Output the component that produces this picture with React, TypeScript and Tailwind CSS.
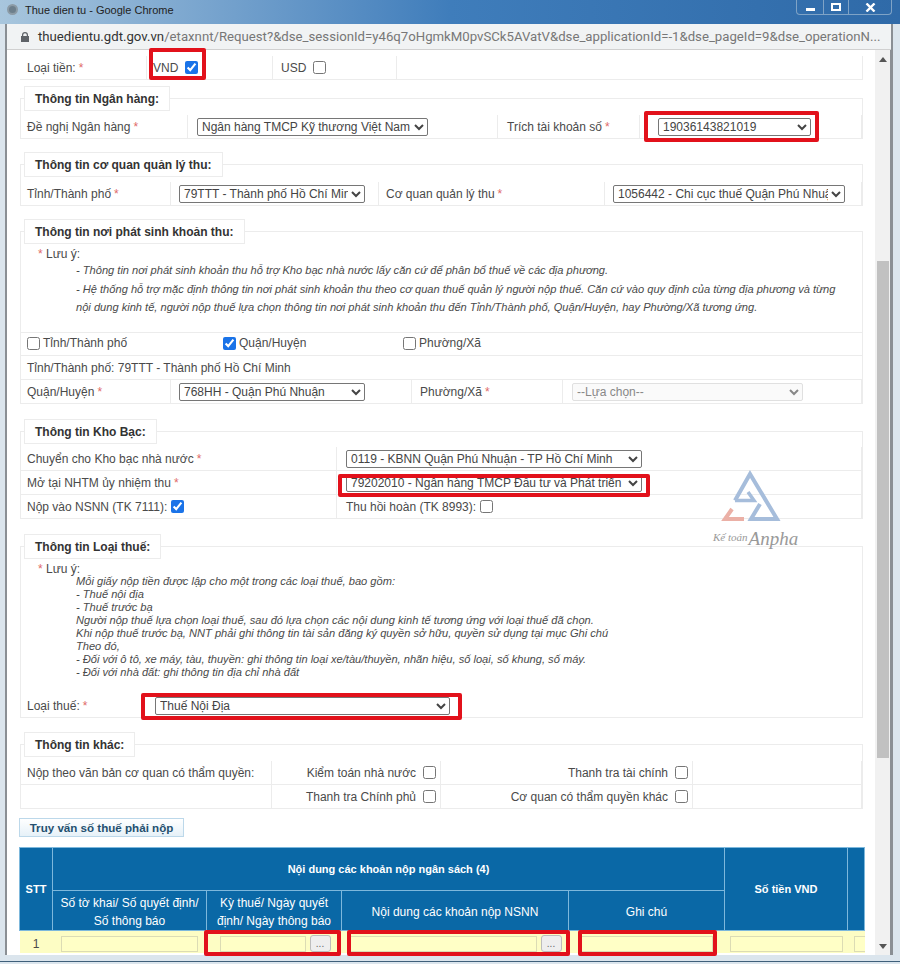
import type { ReactNode } from "react";

const line = "border-[#ececec]";
const selectCls = "h-[18px] border border-[#767676] rounded-[2px] bg-white text-[12px] text-[#444] pl-0";

function Star() {
  return <span className="text-[#e06a6a] ml-[3px]">*</span>;
}

function Red({ className }: { className: string }) {
  return <div className={`absolute z-10 border-4 border-[#e2111b] rounded-[2px] pointer-events-none ${className}`} />;
}

function Row({ cols, children, className = "" }: { cols: string; children: ReactNode; className?: string }) {
  return <div className={`grid h-[24px] border-b ${line} ${cols} ${className}`}>{children}</div>;
}

function Cell({ children, className = "" }: { children?: ReactNode; className?: string }) {
  return <div className={`relative flex items-center border-r ${line} ${className}`}>{children}</div>;
}

function Section({ title, className = "", children }: { title: string; className?: string; children: ReactNode }) {
  return (
    <fieldset className={`border-t border-l border-r ${line} ml-[1px] w-[843px] ${className}`}>
      <legend className={`ml-[3px] h-[25px] px-[10px] flex items-center bg-white border ${line} font-bold text-[12px] text-[#333]`}>
        {title}
      </legend>
      {children}
    </fieldset>
  );
}

function Select({ value, className }: { value: string; className: string }) {
  return (
    <select defaultValue={value} className={`${selectCls} ${className}`}>
      <option>{value}</option>
    </select>
  );
}

function Check({ checked = false, className = "" }: { checked?: boolean; className?: string }) {
  return <input type="checkbox" defaultChecked={checked} className={`w-[13px] h-[13px] m-0 accent-[#1a73e8] ${className}`} />;
}

function Pick() {
  return (
    <button className="w-[21px] h-[17px] rounded-[3px] border border-[#bdbdbd] bg-[#eeeeee] text-[10px] leading-[10px] text-[#666]">...</button>
  );
}

const yellow = "h-[16px] bg-[#ffffc6] border border-[#dcdcb4]";
const th = "border border-[#7db8dc] text-white text-center p-0";
const thTop = `${th} text-[11px] font-bold`;
const thSub = `${th} text-[12px] font-normal leading-[18px] pt-[2px]`;

function Logo() {
  return (
    <div className="absolute left-[700px] top-[465px] w-[110px] h-[90px] z-0 pointer-events-none">
      <svg width="110" height="66" viewBox="0 0 110 66" fill="none">
        <path d="M35 35.5 L50 9 L77 54 L51 54 L60 39" stroke="#a6bddb" strokeWidth="4" strokeLinejoin="miter" />
        <path d="M35 35.5 L54 35.5 L48 27" stroke="#a6bddb" strokeWidth="3.5" />
        <path d="M32 44 L25 54 L44 54" stroke="#ebb0a6" strokeWidth="4" />
      </svg>
      <div className="absolute left-[13px] top-[60px] flex items-baseline text-[#999] italic font-['Liberation_Serif',serif]">
        <span className="text-[11px] -translate-y-[4px]">Kế toán</span>
        <span className="text-[19px] ml-[1px]">Anpha</span>
      </div>
    </div>
  );
}

export default function App() {
  return (
    <div className="relative w-[900px] h-[964px] overflow-hidden bg-[#dbe5ed] font-['Liberation_Sans',sans-serif] text-[12px] text-[#4a4a4a]">
      {/* title bar */}
      <div className="h-[24px] flex items-start bg-gradient-to-r from-[#a8c6dd] via-[#3f7dbb] to-[#2f6aa8]">
        <div className="ml-[7px] mt-[4px] w-[11px] h-[11px] rounded-full bg-[#6d7f8c] border-2 border-[#8c9ba6]" />
        <span className="ml-[7px] mt-[2px] text-[11px] text-[#222]">Thue dien tu - Google Chrome</span>
        <div className="ml-auto mr-[8px] flex h-[15px] border border-t-0 border-[#7fa3c6] rounded-b-[4px] w-[96px]">
          <div className="w-[27px] flex items-end justify-center pb-[3px] border-r border-[#7fa3c6]">
            <div className="w-[9px] h-[3px] bg-white" />
          </div>
          <div className="w-[25px] flex items-center justify-center border-r border-[#7fa3c6]">
            <div className="w-[10px] h-[8px] border-2 border-white" />
          </div>
          <div className="flex-1 flex items-center justify-center">
            <svg width="11" height="9" viewBox="0 0 11 9"><path d="M1.5 0.5 L9.5 8.5 M9.5 0.5 L1.5 8.5" stroke="white" strokeWidth="2.4" /></svg>
          </div>
        </div>
      </div>

      <div className="ml-[5px] w-[888px] h-[931px] border-x-2 border-[#8a8f94] bg-white flex flex-col">
        {/* address bar */}
        <div className="h-[26px] shrink-0 bg-[#f1f3f4] border-b border-[#d0d0d0] flex items-center pl-[14px] whitespace-nowrap">
          <svg className="shrink-0" width="8" height="10" viewBox="0 0 8 10" fill="#5f6368">
            <path d="M1 4 V3 a3 3 0 0 1 6 0 V4 H8 V10 H0 V4 Z M2.2 4 H5.8 V3 a1.8 1.8 0 0 0 -3.6 0 Z" />
          </svg>
          <span className="ml-[9px] text-[13.2px] font-['Roboto',sans-serif] text-[#333]">
            thuedientu.gdt.gov.vn<span className="text-[#777]">/etaxnnt/Request?&amp;dse_sessionId=y46q7oHgmkM0pvSCk5AVatV&amp;dse_applicationId=-1&amp;dse_pageId=9&amp;dse_operationN...</span>
          </span>
        </div>

        <div className="flex-1 flex min-h-0">
          {/* page */}
          <div className="w-[868px] pl-[12px] pt-[6px]">
            <Row cols="grid-cols-[127px_126px_124px_466px]" className="ml-[1px] w-[843px] border-t-0">
              <Cell className="pl-[7px]">Loại tiền:<Star /></Cell>
              <Cell className="pl-[6px] gap-[7px]">
                VND <Check checked />
                <Red className="left-[2px] -top-[8px] w-[57px] h-[32px]" />
              </Cell>
              <Cell className="pl-[8px] gap-[7px]">USD <Check /></Cell>
              <Cell />
            </Row>

            <Section title="Thông tin Ngân hàng:" className="mt-[6px]">
              <Row cols="grid-cols-[167px_310px_142px_1fr]" className="mt-[4px]">
                <Cell className="pl-[6px]">Đề nghị Ngân hàng<Star /></Cell>
                <Cell className="pl-[9px]"><Select value="Ngân hàng TMCP Kỹ thương Việt Nam" className="w-[231px]" /></Cell>
                <Cell className="pl-[9px]">Trích tài khoản số<Star /></Cell>
                <Cell className="pl-[18px]">
                  <Select value="19036143821019" className="w-[153px]" />
                  <Red className="left-[4px] -top-[4px] w-[175px] h-[31px]" />
                </Cell>
              </Row>
            </Section>

            <Section title="Thông tin cơ quan quản lý thu:" className="mt-[13px]">
              <Row cols="grid-cols-[150px_208px_226px_1fr]" className="mt-[5px]">
                <Cell className="pl-[6px]">Tỉnh/Thành phố<Star /></Cell>
                <Cell className="pl-[8px]"><Select value="79TTT - Thành phố Hồ Chí Minh" className="w-[186px]" /></Cell>
                <Cell className="pl-[7px]">Cơ quan quản lý thu<Star /></Cell>
                <Cell className="pl-[8px]"><Select value="1056442 - Chi cục thuế Quận Phú Nhuận" className="w-[232px]" /></Cell>
              </Row>
            </Section>

            <Section title="Thông tin nơi phát sinh khoản thu:" className="mt-[13px]">
              <div className="h-[88px] pl-[17px] pt-[2px] leading-[17px]">
                <div><span className="text-[#e06a6a]">* </span>Lưu ý:</div>
                <div className="pl-[38px] -mt-[2px] italic text-[11.1px] leading-[18.5px]">
                  - Thông tin nơi phát sinh khoản thu hỗ trợ Kho bạc nhà nước lấy căn cứ để phân bổ thuế về các địa phương.<br />
                  - Hệ thống hỗ trợ mặc định thông tin nơi phát sinh khoản thu theo cơ quan thuế quản lý người nộp thuế. Căn cứ vào quy định của từng địa phương và từng<br />
                  nội dung kinh tế, người nộp thuế lựa chọn thông tin nơi phát sinh khoản thu đến Tỉnh/Thành phố, Quận/Huyện, hay Phường/Xã tương ứng.
                </div>
              </div>
              <Row cols="grid-cols-[196px_180px_1fr]" className="border-t">
                <div className="flex items-center gap-[3px] pl-[6px] -translate-y-[1px]"><Check />Tỉnh/Thành phố</div>
                <div className="flex items-center gap-[3px] pl-[6px] -translate-y-[1px]"><Check checked />Quận/Huyện</div>
                <div className="flex items-center gap-[3px] pl-[6px] -translate-y-[1px]"><Check />Phường/Xã</div>
              </Row>
              <div className={`h-[24px] flex items-center pl-[6px] border-b ${line}`}>Tỉnh/Thành phố: 79TTT - Thành phố Hồ Chí Minh</div>
              <Row cols="grid-cols-[150px_241px_151px_1fr]">
                <Cell className="pl-[6px]">Quận/Huyện<Star /></Cell>
                <Cell className="pl-[8px]"><Select value="768HH - Quận Phú Nhuận" className="w-[186px]" /></Cell>
                <Cell className="pl-[8px]">Phường/Xã<Star /></Cell>
                <Cell className="pl-[9px]">
                  <select disabled defaultValue="--Lựa chọn--" className="w-[231px] h-[18px] border border-[#e0e0e0] rounded-[2px] bg-[#fafafa] text-[12px] text-[#888] pl-0">
                    <option>--Lựa chọn--</option>
                  </select>
                </Cell>
              </Row>
            </Section>

            <Section title="Thông tin Kho Bạc:" className="mt-[15px]">
              <Row cols="grid-cols-[316px_1fr]" className="mt-[3px]">
                <Cell className="pl-[6px]">Chuyển cho Kho bạc nhà nước<Star /></Cell>
                <Cell className="pl-[9px]"><Select value="0119 - KBNN Quận Phú Nhuận - TP Hồ Chí Minh" className="w-[296px]" /></Cell>
              </Row>
              <Row cols="grid-cols-[316px_1fr]">
                <Cell className="pl-[6px]">Mở tại NHTM ủy nhiệm thu<Star /></Cell>
                <Cell className="pl-[9px]">
                  <Select value="79202010 - Ngân hàng TMCP Đầu tư và Phát triển" className="w-[296px]" />
                  <Red className="left-[1px] top-[3px] w-[312px] h-[23px]" />
                </Cell>
              </Row>
              <Row cols="grid-cols-[316px_1fr]">
                <Cell className="pl-[6px] gap-[4px]">Nộp vào NSNN (TK 7111): <Check checked /></Cell>
                <Cell className="pl-[9px] gap-[4px]">Thu hồi hoàn (TK 8993): <Check /></Cell>
              </Row>
            </Section>

            <Section title="Thông tin Loại thuế:" className="mt-[15px]">
              <div className="h-[135px] pl-[17px] pt-[3px]">
                <div className="leading-[14px]"><span className="text-[#e06a6a]">* </span>Lưu ý:</div>
                <div className="pl-[38px] italic text-[11.1px] leading-[13px] -mt-[1px]">
                  Mỗi giấy nộp tiền được lập cho một trong các loại thuế, bao gồm:<br />
                  - Thuế nội địa<br />
                  - Thuế trước bạ<br />
                  Người nộp thuế lựa chọn loại thuế, sau đó lựa chọn các nội dung kinh tế tương ứng với loại thuế đã chọn.<br />
                  Khi nộp thuế trước bạ, NNT phải ghi thông tin tài sản đăng ký quyền sở hữu, quyền sử dụng tại mục Ghi chú<br />
                  Theo đó,<br />
                  - Đối với ô tô, xe máy, tàu, thuyền: ghi thông tin loại xe/tàu/thuyền, nhãn hiệu, số loại, số khung, số máy.<br />
                  - Đối với nhà đất: ghi thông tin địa chỉ nhà đất
                </div>
              </div>
              <Row cols="grid-cols-[120px_1fr]">
                <div className="flex items-center pl-[6px]">Loại thuế:<Star /></div>
                <div className="relative flex items-center pl-[14px]">
                  <Select value="Thuế Nội Địa" className="w-[295px]" />
                  <Red className="left-0 -top-[1px] w-[321px] h-[27px]" />
                </div>
              </Row>
            </Section>

            <Section title="Thông tin khác:" className="mt-[14px]">
              <Row cols="grid-cols-[251px_169px_252px_1fr]" className="mt-[4px]">
                <Cell className="pl-[6px]">Nộp theo văn bản cơ quan có thẩm quyền:</Cell>
                <Cell className="justify-end pr-[4px] gap-[7px]">Kiểm toán nhà nước <Check /></Cell>
                <Cell className="justify-end pr-[4px] gap-[7px]">Thanh tra tài chính <Check /></Cell>
                <Cell />
              </Row>
              <Row cols="grid-cols-[251px_169px_252px_1fr]">
                <Cell />
                <Cell className="justify-end pr-[4px] gap-[7px]">Thanh tra Chính phủ <Check /></Cell>
                <Cell className="justify-end pr-[4px] gap-[7px]">Cơ quan có thẩm quyền khác <Check /></Cell>
                <Cell />
              </Row>
            </Section>

            <button className="block mt-[9px] w-[165px] h-[19px] border border-[#bcd8ea] bg-gradient-to-b from-white to-[#e6f1f8] text-[11.6px] font-bold text-[#24506f]">
              Truy vấn số thuế phải nộp
            </button>

            <table className="mt-[10px] table-fixed border-collapse w-[845px]">
              <colgroup>
                <col className="w-[33px]" />
                <col className="w-[154px]" />
                <col className="w-[135px]" />
                <col className="w-[227px]" />
                <col className="w-[156px]" />
                <col className="w-[123px]" />
                <col className="w-[17px]" />
              </colgroup>
              <thead className="bg-[#0a68a6]">
                <tr className="h-[43px]">
                  <th rowSpan={2} className={thTop}>STT</th>
                  <th colSpan={4} className={thTop}>Nội dung các khoản nộp ngân sách (4)</th>
                  <th rowSpan={2} className={thTop}>Số tiền VND</th>
                  <th rowSpan={2} className={thTop}></th>
                </tr>
                <tr className="h-[40px]">
                  <th className={thSub}>Số tờ khai/ Số quyết định/<br />Số thông báo</th>
                  <th className={thSub}>Kỳ thuế/ Ngày quyết<br />định/ Ngày thông báo</th>
                  <th className={thSub}>Nội dung các khoản nộp NSNN</th>
                  <th className={thSub}>Ghi chú</th>
                </tr>
              </thead>
              <tbody>
                <tr className="h-[22px] bg-[#fdfdc4] text-center">
                  <td className="p-0"><div className="translate-y-[2px]">1</div></td>
                  <td className="p-0"><div className="flex justify-center translate-y-[2px]"><div className={`w-[137px] ${yellow}`} /></div></td>
                  <td className="p-0 relative">
                    <div className="flex items-center pl-[13px] gap-[4px] translate-y-[2px]"><div className={`w-[86px] ${yellow}`} /><Pick /></div>
                    <Red className="-left-[3px] -top-[1px] w-[137px] h-[26px]" />
                  </td>
                  <td className="p-0 relative">
                    <div className="flex items-center pl-[8px] gap-[4px] translate-y-[2px]"><div className={`w-[187px] ${yellow}`} /><Pick /></div>
                    <Red className="left-[5px] -top-[1px] w-[223px] h-[26px]" />
                  </td>
                  <td className="p-0 relative">
                    <div className="flex pl-[12px] translate-y-[2px]"><div className={`w-[132px] ${yellow}`} /></div>
                    <Red className="left-[9px] -top-[1px] w-[139px] h-[26px]" />
                  </td>
                  <td className="p-0"><div className="flex justify-center translate-y-[2px]"><div className={`w-[113px] ${yellow}`} /></div></td>
                  <td className="p-0 overflow-hidden"><div className={`ml-[6px] w-[40px] translate-y-[2px] ${yellow}`} /></td>
                </tr>
              </tbody>
            </table>
          </div>

          {/* scrollbar */}
          <div className="w-[16px] mr-auto bg-[#f1f1f1] flex flex-col items-center relative border-r border-[#8a8f94]">
            <svg className="mt-[7px] shrink-0" width="8" height="5" viewBox="0 0 8 5"><path d="M4 0 L8 5 L0 5 Z" fill="#555" /></svg>
            <div className="mt-[199px] w-[12px] h-[497px] bg-[#c1c1c1]" />
            <svg className="mt-auto mb-[6px] shrink-0" width="8" height="5" viewBox="0 0 8 5"><path d="M4 5 L8 0 L0 0 Z" fill="#555" /></svg>
          </div>
        </div>
      </div>
      <div className="absolute left-0 right-0 bottom-[2px] h-[1px] bg-[#3f5f7a]" />
      <Logo />
    </div>
  );
}
